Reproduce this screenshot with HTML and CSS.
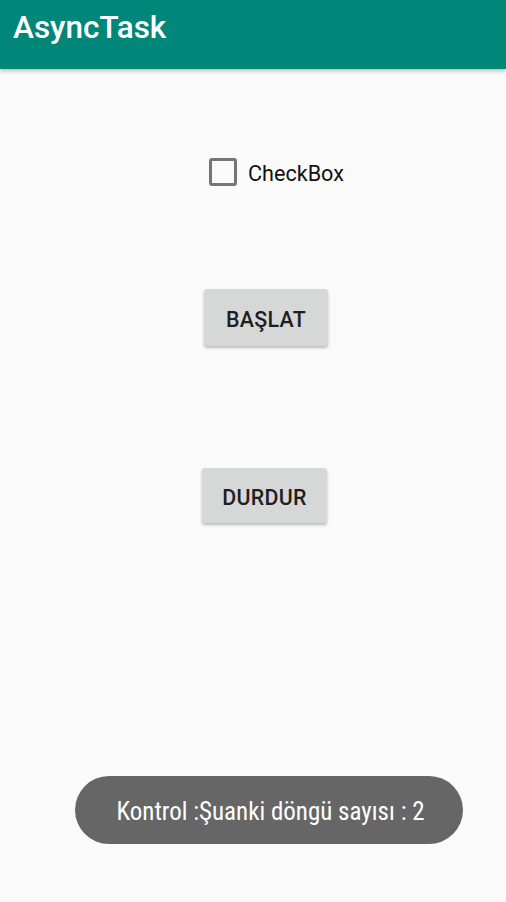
FILE: index.html
```html
<!DOCTYPE html>
<html>
<head>
<meta charset="utf-8">
<link rel="stylesheet" href="styles.css">
</head>
<body>
<header class="appbar"><h1 class="title">AsyncTask</h1></header>
<main class="content">
  <label class="check-row">
    <span class="check-box"></span>
    <span class="check-label">CheckBox</span>
  </label>
  <button class="btn btn-start">BAŞLAT</button>
  <button class="btn btn-stop">DURDUR</button>
</main>
<div class="toast">Kontrol :Şuanki döngü sayısı : 2</div>
</body>
</html>
```
FILE: styles.css
```css
html, body {
  margin: 0;
  padding: 0;
  background: #fafafa;
  font-family: Roboto, "Noto Sans", sans-serif;
  height: 100%;
  overflow: hidden;
}
.appbar {
  height: 69px;
  background: #00877a;
  box-shadow: 0 2px 4px rgba(0,0,0,0.25);
  display: flex;
  align-items: center;
  position: relative;
  z-index: 1;
}
.title {
  margin: 0 0 0 13px;
  color: #fff;
  font-size: 31.5px;
  font-weight: 500;
  line-height: 1;
  padding-bottom: 14px;
}
.content {
  display: flex;
  flex-direction: column;
  align-items: flex-start;
}
.check-row {
  display: flex;
  align-items: center;
  margin: 89px 0 0 209px;
}
.check-box {
  width: 22px;
  height: 22px;
  border: 3px solid #757575;
  border-radius: 3px;
}
.check-label {
  margin-left: 11px;
  font-size: 21.6px;
  color: #111;
  padding-top: 2px;
}
.btn {
  border: none;
  background: #d6d7d7;
  border-radius: 3px;
  box-shadow: 0 2px 3px rgba(0,0,0,0.25);
  font-family: Roboto, sans-serif;
  font-weight: 500;
  font-size: 21.4px;
  color: #1f1f1f;
  padding: 3px 0 0 0;
  letter-spacing: 0.3px;
}
.btn-start {
  width: 124px;
  height: 57px;
  margin: 103px 0 0 204px;
}
.btn-stop {
  width: 125px;
  height: 55px;
  margin: 122px 0 0 202px;
}
.toast {
  position: absolute;
  left: 75px;
  top: 776px;
  width: 388px;
  height: 68px;
  border-radius: 34px;
  background: #666666;
  color: #fff;
  font-size: 25px;
  display: flex;
  align-items: center;
  justify-content: center;
  font-stretch: condensed;
  padding: 3px 0 0 3px;
  box-sizing: border-box;
}
```
